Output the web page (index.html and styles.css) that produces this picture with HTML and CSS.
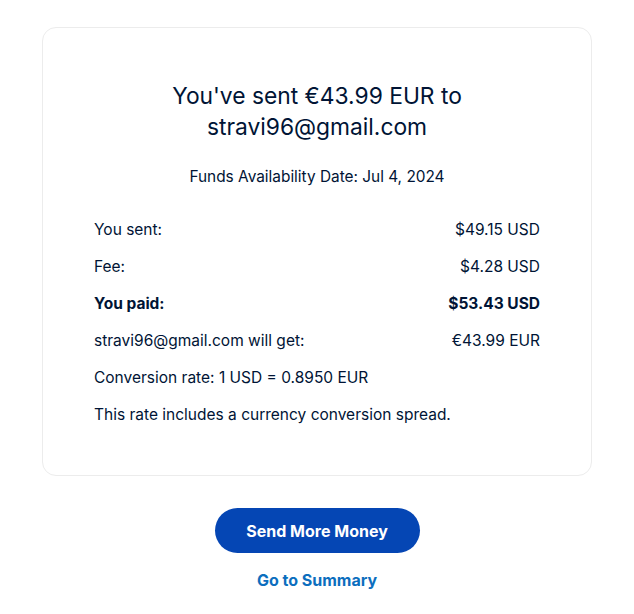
FILE: index.html
```html
<!DOCTYPE html>
<html lang="en">
<head>
<meta charset="utf-8">
<title>Payment sent</title>
<link rel="stylesheet" href="styles.css">
</head>
<body>
<main class="page">
  <section class="card">
    <h1 class="title">You've sent €43.99 EUR to<br>stravi96@gmail.com</h1>
    <p class="date">Funds Availability Date: Jul 4, 2024</p>
    <div class="rows">
      <div class="row"><span>You sent:</span><span>$49.15 USD</span></div>
      <div class="row"><span>Fee:</span><span>$4.28 USD</span></div>
      <div class="row row-bold"><span>You paid:</span><span>$53.43 USD</span></div>
      <div class="row"><span>stravi96@gmail.com will get:</span><span>€43.99 EUR</span></div>
      <div class="row"><span>Conversion rate: 1 USD = 0.8950 EUR</span></div>
      <div class="row"><span>This rate includes a currency conversion spread.</span></div>
    </div>
  </section>
  <div class="actions">
    <button class="btn-primary" type="button">Send More Money</button>
    <a class="link" href="#">Go to Summary</a>
  </div>
</main>
</body>
</html>
```
FILE: styles.css
```css
* { box-sizing: border-box; }
html, body { margin: 0; padding: 0; background: #fff; }
body {
  font-family: Inter, "Liberation Sans", Arial, sans-serif;
  color: #001435;
}
.page {
  display: flex;
  flex-direction: column;
  align-items: center;
  padding-top: 27px;
}
.card {
  width: 550px;
  border: 1px solid #ececec;
  border-radius: 14px;
  padding: 52px 51px 50px;
}
.title {
  margin: 0;
  font-size: 22.8px;
  line-height: 31px;
  font-weight: 400;
  text-align: center;
}
.date {
  margin: 25px 0 0;
  font-size: 15.4px;
  line-height: 20px;
  text-align: center;
}
.rows {
  margin-top: 33px;
  display: flex;
  flex-direction: column;
  gap: 17px;
}
.row {
  display: flex;
  justify-content: space-between;
  font-size: 15.5px;
  line-height: 20px;
}
.row-bold { font-weight: 700; }
.actions {
  margin-top: 32px;
  display: flex;
  flex-direction: column;
  align-items: center;
  gap: 17px;
}
.btn-primary {
  width: 205px;
  height: 45px;
  border: 0;
  border-radius: 23px;
  background: #0546b4;
  color: #fff;
  font-family: inherit;
  font-size: 16px;
  font-weight: 700;
  cursor: pointer;
}
.link {
  color: #0c6ebe;
  font-size: 16px;
  line-height: 20px;
  font-weight: 700;
  text-decoration: none;
}
```
